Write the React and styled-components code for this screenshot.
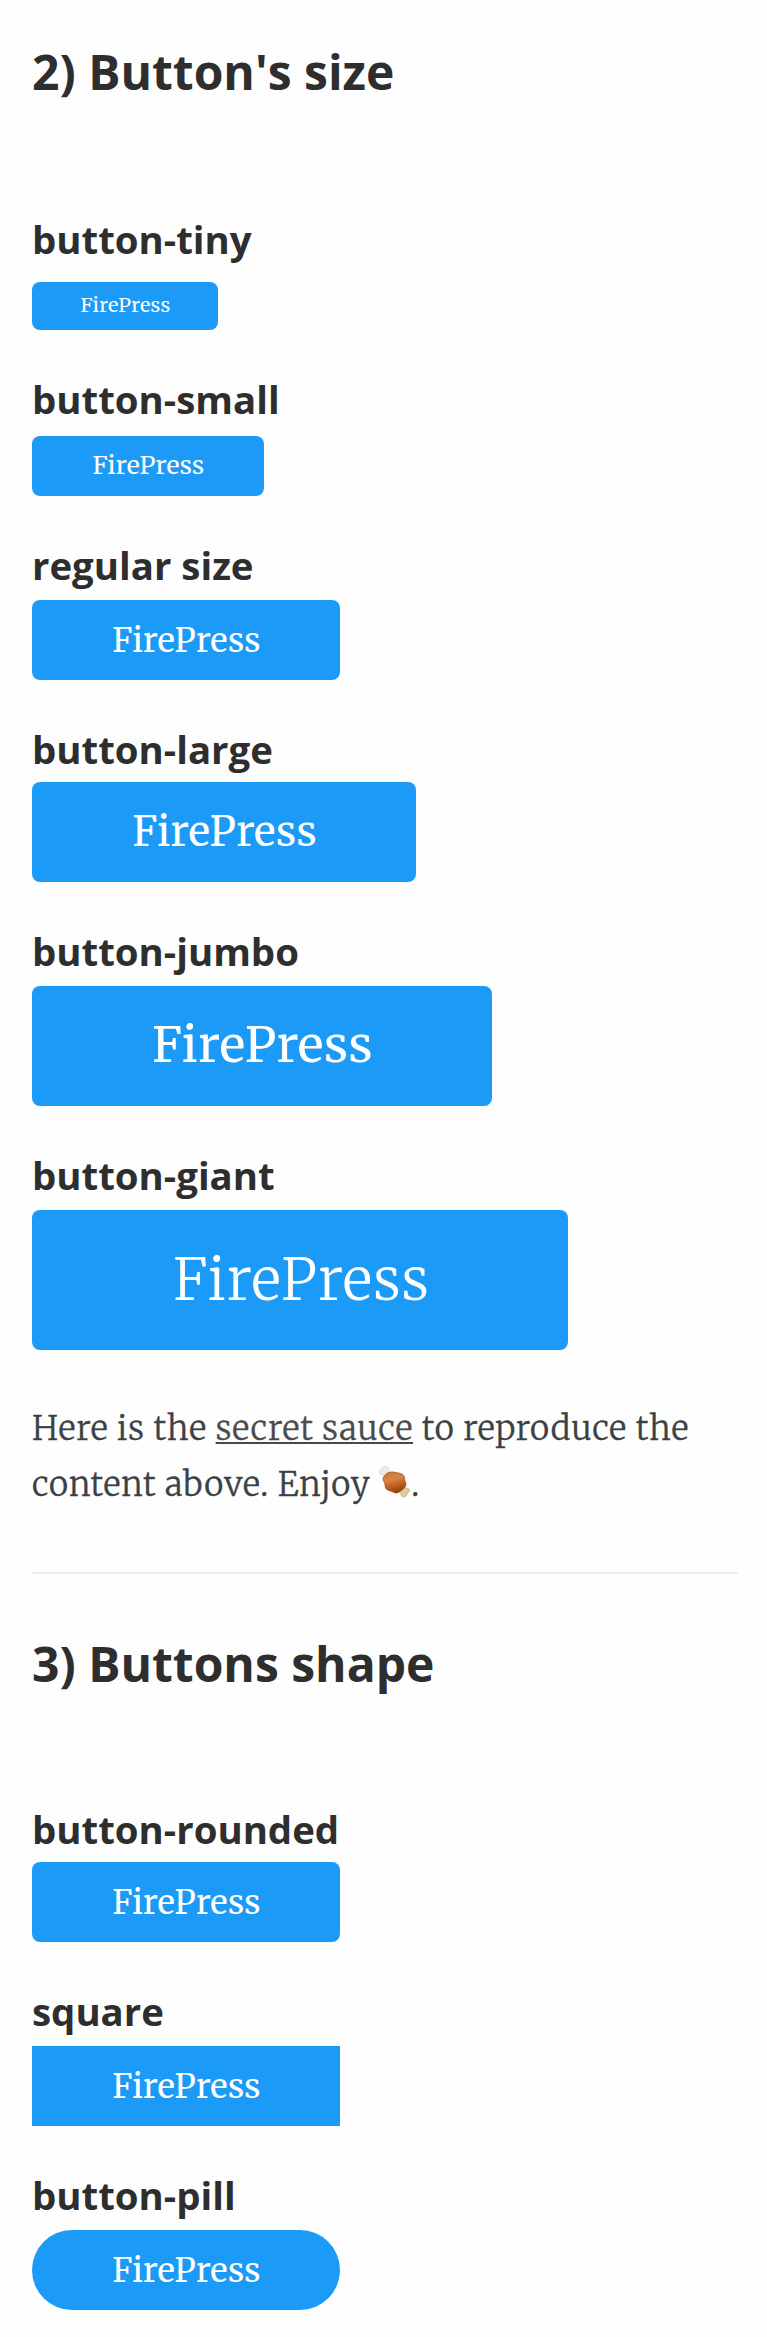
import React from "react";
import styled, { createGlobalStyle } from "styled-components";

const GlobalStyle = createGlobalStyle`
  * { box-sizing: border-box; }
  body { margin: 0; background: #fefefe; }
`;

const serif = '"Merriweather", "DejaVu Serif Condensed", "DejaVu Serif", serif';
const sans = '"Open Sans", "Noto Sans", sans-serif';

const Page = styled.main`
  min-height: 2337px;
  padding: 42px 29px 27px 32px;
`;

const Title = styled.h1`
  margin: 0;
  font: 700 48px/60px ${sans};
  color: #2e2e2e;
`;

const Samples = styled.section`
  display: flex;
  flex-direction: column;
  align-items: flex-start;
  gap: 44px;
  padding-top: ${({ $top }) => $top}px;
`;

const Sample = styled.div`
  display: flex;
  flex-direction: column;
  align-items: flex-start;
  gap: ${({ $gap }) => $gap}px;
`;

const Label = styled.h2`
  margin: 0;
  font: 700 38.4px/50px ${sans};
  color: #2e2e2e;
`;

const sizes = {
  tiny: { w: 186, h: 48, font: 19.8, track: 0.26, weight: 400, pad: "0 0 2px 1px" },
  small: { w: 232, h: 60, font: 24.7, track: 0.28, weight: 400, pad: "0 0 1px 1px" },
  regular: { w: 308, h: 80, font: 33, track: 0.26, weight: 400, pad: "0 0 0 1px" },
  large: { w: 384, h: 100, font: 41, track: 0.33, weight: 400, pad: "0 0 1px 1px" },
  jumbo: { w: 460, h: 120, font: 49, track: 0.4, weight: 400, pad: "0 0 3px 1px" },
  giant: { w: 536, h: 140, font: 57, track: 1.2, weight: 300, pad: "0 0 1px 3px" },
};
const radii = { rounded: 8, square: 0, pill: 200 };

const Button = styled.button`
  width: ${({ $size }) => sizes[$size].w}px;
  height: ${({ $size }) => sizes[$size].h}px;
  padding: ${({ $size }) => sizes[$size].pad};
  border: 0;
  border-radius: ${({ $shape }) => radii[$shape]}px;
  background: #1b9af7;
  color: #fff;
  font-family: ${serif};
  font-size: ${({ $size }) => sizes[$size].font}px;
  font-weight: ${({ $size }) => sizes[$size].weight};
  letter-spacing: ${({ $size }) => sizes[$size].track}px;
  text-align: center;
  cursor: pointer;
`;

const Paragraph = styled.p`
  margin: 51px 0 59px;
  font: 300 33px/56px ${serif};
  letter-spacing: 0.87px;
  color: #3a4145;
  -webkit-text-stroke: 0.35px;
`;

const Link = styled.a`
  color: #4a4a4a;
  text-decoration: underline;
  text-decoration-thickness: 2px;
  text-underline-offset: 2px;
  text-decoration-skip-ink: none;
`;

const Divider = styled.hr`
  height: 2px;
  margin: 0 0 60px;
  border: 0;
  background: #eee;
`;

const MeatSvg = styled.svg`
  width: 35px;
  height: 36px;
  margin-left: -3px;
  vertical-align: -2px;
`;

const Meat = () => (
  <MeatSvg viewBox="0 0 35 36" role="img" aria-label="meat on bone">
    <defs>
      <linearGradient id="meat" x1="0.3" y1="0" x2="0.6" y2="1">
        <stop offset="0" stopColor="#cf7a3a" />
        <stop offset="0.35" stopColor="#d98442" />
        <stop offset="0.7" stopColor="#b9591d" />
        <stop offset="1" stopColor="#8c3a0e" />
      </linearGradient>
    </defs>
    <path d="M3.500 9c0-1.700 1.200-2.400 2.500-2.500 .8-1.800 3.600-3 4.900-1.500 1.300-.4 2.200.8 1.900 2.200L13.500 11l-5 2.500C5.500 13.600 3 11.500 3.500 9Z" fill="#efeadd" stroke="#d2cbb8" strokeWidth=".6" />
    <path d="M24.500 28.500l4.500-2.500c2.200-.4 4.700.5 4.500 2.400 0 1.500-1 1.800-1.800 2.300-.2 2-2.200 4.500-4.300 4.300-2-.2-2.600-1.500-2.500-3Z" fill="#dccb9b" stroke="#b9a570" strokeWidth=".6" />
    <path d="M9.500 12.500C12 10 15.500 9.700 18.500 10.200c3 .6 6 1 8.500 2.500 1.500 1 1.500 3 1.700 5 .3 2 1.700 3.500 1.300 5.300-1 3-3.500 4.500-5.700 6.300-2.300 2-4.300 2.300-6.800.9-2.500-1.300-5.500-1.500-7.300-3.200-1.300-1.500-.9-3.500-1.500-5.500C8.100 19.200 6.700 18 7 16.500 7.300 15 8.300 13.700 9.500 12.500Z" fill="url(#meat)" stroke="#93461a" strokeWidth=".7" />
  </MeatSvg>
);

const sizeSamples = [
  { label: "button-tiny", size: "tiny", gap: 18 },
  { label: "button-small", size: "small", gap: 12 },
  { label: "regular size", size: "regular", gap: 10 },
  { label: "button-large", size: "large", gap: 8 },
  { label: "button-jumbo", size: "jumbo", gap: 10 },
  { label: "button-giant", size: "giant", gap: 10 },
];

const shapeSamples = [
  { label: "button-rounded", shape: "rounded", gap: 8 },
  { label: "square", shape: "square", gap: 10 },
  { label: "button-pill", shape: "pill", gap: 10 },
];

const SampleList = ({ items, top }) => (
  <Samples $top={top}>
    {items.map(({ label, size = "regular", shape = "rounded", gap }) => (
      <Sample key={label} $gap={gap}>
        <Label>{label}</Label>
        <Button $size={size} $shape={shape}>FirePress</Button>
      </Sample>
    ))}
  </Samples>
);

export default function App() {
  return (
    <>
      <GlobalStyle />
      <Page>
        <Title>2) Button's size</Title>
        <SampleList items={sizeSamples} top={112} />
        <Paragraph>
          Here is the <Link>secret sauce</Link> to reproduce the
          <br />
          content above. Enjoy <Meat />.
        </Paragraph>
        <Divider />
        <Title>3) Buttons shape</Title>
        <SampleList items={shapeSamples} top={110} />
      </Page>
    </>
  );
}
